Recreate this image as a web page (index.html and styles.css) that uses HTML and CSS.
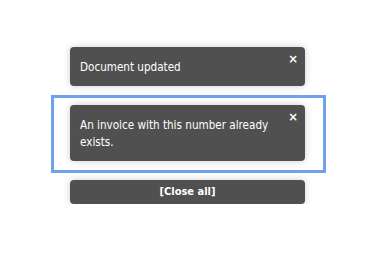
FILE: index.html
```html
<!DOCTYPE html>
<html>
<head>
<meta charset="utf-8">
<link rel="stylesheet" href="styles.css">
</head>
<body>
<div class="stack">
  <div class="toast"><span class="text">Document updated</span><span class="close">×</span></div>
  <div class="toast focused"><span class="text">An invoice with this number already exists.</span><span class="close">×</span></div>
  <div class="closeall">[Close all]</div>
</div>
</body>
</html>
```
FILE: styles.css
```css
html, body { margin: 0; background: #fff; }
body { font-family: "DejaVu Sans Condensed", "DejaVu Sans", sans-serif; font-size: 11.6px; }
.stack { width: 235px; margin-left: 70px; padding-top: 47px; display: flex; flex-direction: column; gap: 19px; }
.toast { position: relative; background: #505050; color: #fff; border-radius: 4px; padding: 12px 30px 10px 10px; line-height: 17px; box-shadow: 0 0 7px rgba(0,0,0,0.2); }
.focused::before { content: ""; position: absolute; left: -19px; right: -21px; top: -10px; bottom: -12px; border: 3px solid #70a1ea; }
.close { position: absolute; right: 7px; top: 3px; font-weight: bold; font-size: 13px; }
.closeall { background: #505050; color: #fff; border-radius: 4px; height: 24px; line-height: 24px; text-align: center; font-weight: bold; font-size: 11px; box-shadow: 0 0 7px rgba(0,0,0,0.2); }
```
